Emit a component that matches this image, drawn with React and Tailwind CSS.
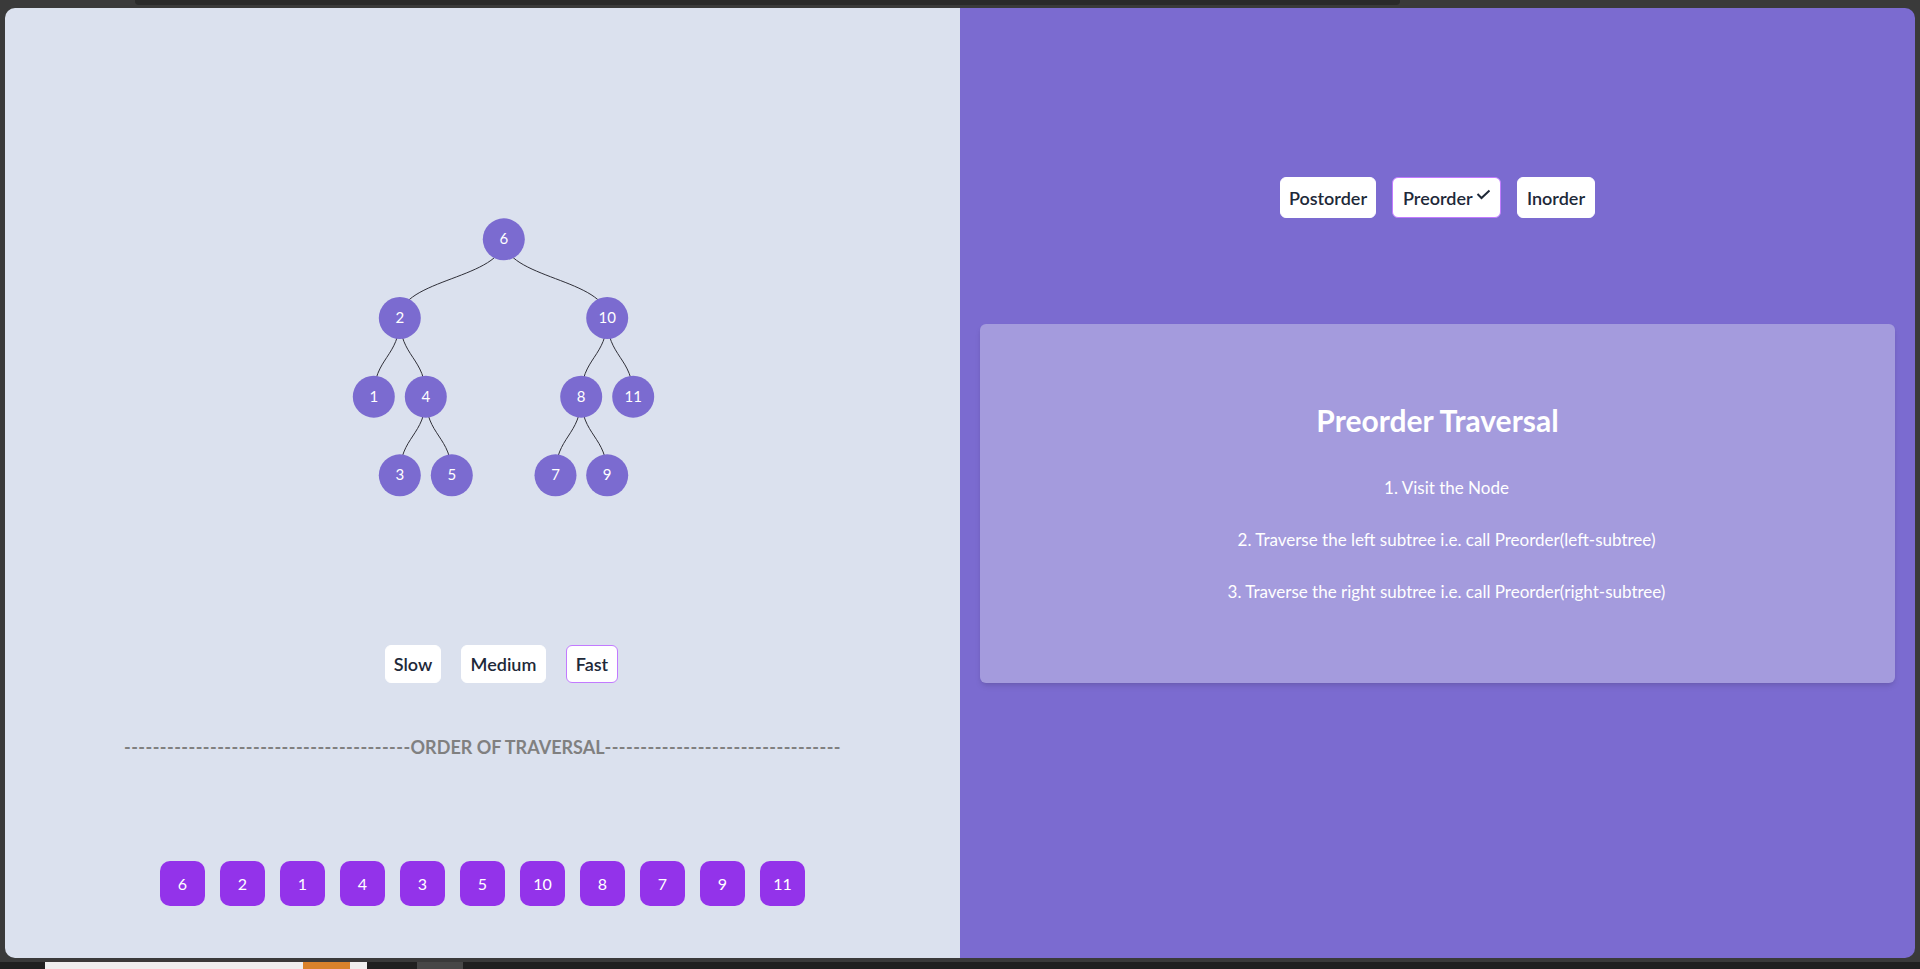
import React from 'react';

const FONT = { fontFamily: 'Lato, "Open Sans", sans-serif' };

// tree layout (svg coords, svg is 400x300 centred in left panel)
const NODES = [
  { id: 6, x: 220.8, y: 31.3 },
  { id: 2, x: 116.8, y: 110 },
  { id: 10, x: 324.2, y: 110 },
  { id: 1, x: 90.8, y: 188.7 },
  { id: 4, x: 142.8, y: 188.7 },
  { id: 8, x: 298.2, y: 188.7 },
  { id: 11, x: 350.2, y: 188.7 },
  { id: 3, x: 116.8, y: 267.3 },
  { id: 5, x: 168.8, y: 267.3 },
  { id: 7, x: 272.5, y: 267.3 },
  { id: 9, x: 324.2, y: 267.3 },
];

const LINKS = [
  [6, 2], [6, 10], [2, 1], [2, 4], [4, 3], [4, 5], [10, 8], [10, 11], [8, 7], [8, 9],
];

const ORDER = [6, 2, 1, 4, 3, 5, 10, 8, 7, 9, 11];

function byId(id) {
  return NODES.find((n) => n.id === id);
}

function TreeView() {
  return (
    <svg width="400" height="300" viewBox="0 0 400 300" className="block">
      {LINKS.map(([a, b]) => {
        const p = byId(a);
        const c = byId(b);
        const my = (p.y + c.y) / 2;
        return (
          <path
            key={`${a}-${b}`}
            d={`M${p.x},${p.y} C${p.x},${my} ${c.x},${my} ${c.x},${c.y}`}
            fill="none"
            stroke="#2f2f38"
            strokeWidth="1"
          />
        );
      })}
      {NODES.map((n) => (
        <g key={n.id}>
          <circle cx={n.x} cy={n.y} r="21" fill="#7b6bd0" />
          <text
            x={n.x}
            y={n.y + 5}
            textAnchor="middle"
            fontSize="15"
            fill="#ffffff"
            style={FONT}
          >
            {n.id}
          </text>
        </g>
      ))}
    </svg>
  );
}

function SpeedButtons() {
  return (
    <div className="flex justify-center gap-5 pl-[38px]">
      <button className="h-[38px] w-[56px] rounded-md border border-white bg-white text-lg font-semibold text-gray-800">
        Slow
      </button>
      <button className="h-[38px] w-[85px] rounded-md border border-white bg-white text-lg font-semibold text-gray-800">
        Medium
      </button>
      <button className="h-[38px] w-[52px] rounded-md border border-purple-400 bg-white text-lg font-semibold text-gray-800">
        Fast
      </button>
    </div>
  );
}

function TraversalButtons() {
  return (
    <div className="flex justify-center gap-4">
      <button className="h-[41px] w-[96px] rounded-md border border-white bg-white text-lg font-semibold text-gray-800">
        Postorder
      </button>
      <button className="relative flex h-[41px] w-[109px] items-center rounded-md border border-purple-400 bg-white pl-[10px] text-lg font-semibold text-gray-800">
        Preorder
        <svg
          width="15"
          height="11"
          viewBox="0 0 15 11"
          className="absolute right-[9px] top-[11px]"
        >
          <polyline points="1.5,5 5.5,9 13.5,1.5" fill="none" stroke="#1f2937" strokeWidth="2" />
        </svg>
      </button>
      <button className="h-[41px] w-[78px] rounded-md border border-white bg-white text-lg font-semibold text-gray-800">
        Inorder
      </button>
    </div>
  );
}

export default function App() {
  return (
    <div className="flex h-[969px] w-full flex-col overflow-hidden bg-[#3a3a3a]" style={FONT}>
      {/* top strip of host desktop */}
      <div className="h-[8px] shrink-0 pl-[135px]">
        <div className="h-[5px] w-[1265px] rounded-b bg-[#2a2a2a]" />
      </div>

      <div className="flex h-[950px] shrink-0 px-[5px]">
        <div className="flex flex-1 overflow-hidden rounded-[10px]">
          {/* left: tree + speed + order */}
          <div className="flex w-[955px] flex-col items-center bg-[#dbe1ee] pt-[200px]">
            <TreeView />
            <div className="mt-[137px] w-full">
              <SpeedButtons />
            </div>
            <p className="mt-[50px] whitespace-nowrap text-lg font-bold leading-7 text-[#808080]">
              <span className="tracking-[0.45px]">----------------------------------------</span>
              ORDER OF TRAVERSAL
              <span className="tracking-[0.45px]">---------------------------------</span>
            </p>
            <div className="mt-[100px] flex gap-[15px]">
              {ORDER.map((v) => (
                <div
                  key={v}
                  className="flex h-[45px] w-[45px] items-center justify-center rounded-[10px] bg-[#9333ea] text-base text-white"
                >
                  {v}
                </div>
              ))}
            </div>
          </div>

          {/* right: traversal picker + description */}
          <div className="flex flex-1 flex-col bg-[#7b6bd0] pt-[169px]">
            <TraversalButtons />
            <div className="mx-5 mt-[106px] flex h-[359px] flex-col items-center rounded-md bg-[#a49bdd] pt-[78px] text-white shadow-md">
              <h2 className="text-3xl font-bold leading-9">Preorder Traversal</h2>
              <div className="mt-[38px] flex flex-col items-center gap-[28px] pl-[18px] text-[17px] leading-6">
                <p>1. Visit the Node</p>
                <p>2. Traverse the left subtree i.e. call Preorder(left-subtree)</p>
                <p>3. Traverse the right subtree i.e. call Preorder(right-subtree)</p>
              </div>
            </div>
          </div>
        </div>
      </div>

      {/* bottom strip of host desktop */}
      <div className="h-[4px] shrink-0" />
      <div className="flex h-[7px] shrink-0 items-stretch bg-[#202020] pl-[45px]">
        <div className="flex w-[322px] justify-end bg-[#efefef] pr-[17px]">
          <div className="w-[47px] bg-[#d9822b]" />
        </div>
        <div className="ml-[50px] w-[46px] bg-[#474747]" />
      </div>
    </div>
  );
}
